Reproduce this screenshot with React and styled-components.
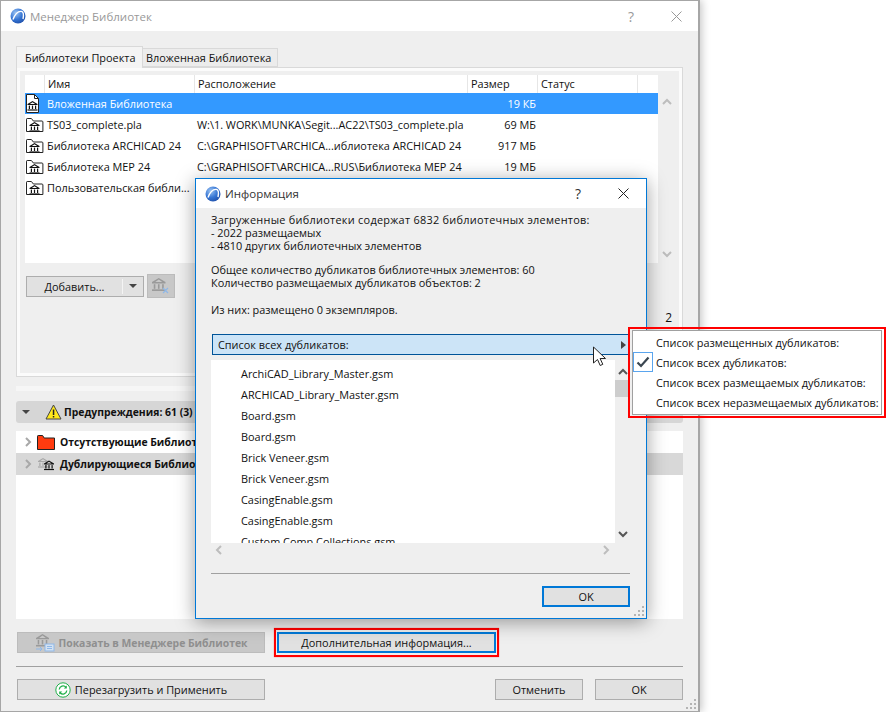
import React from 'react';
import styled, { createGlobalStyle } from 'styled-components';

const Global = createGlobalStyle`
  html, body { margin: 0; padding: 0; background: #fff; }
  body { font-family: "Open Sans", "Noto Sans", sans-serif; font-size: 10.9px; color: #111; }
`;

const Page = styled.div`
  position: relative;
  width: 886px;
  height: 712px;
  overflow: hidden;
  background: #fff;
`;
const Win = styled.div`
  box-sizing: border-box;
  width: 700px;
  height: 712px;
  border: 1px solid #a6a6a6;
  border-width: 1px 2px 1px 1px;
  background: #efefef;
  box-shadow: 2px 0 8px rgba(0, 0, 0, 0.22);
  display: flex;
  flex-direction: column;
  position: relative;
`;
const TitleBar = styled.div`
  height: ${p => p.$h}px;
  flex: none;
  background: #fff;
  display: flex;
  align-items: center;
  padding: 0 ${p => p.$right}px 0 ${p => p.$left}px;
  gap: 4px;
  font-size: 11.5px;
  color: ${p => (p.$active ? '#333' : '#999')};
`;
const TitleText = styled.span`
  flex: 1;
`;
const TitleBtn = styled.span`
  width: 20px;
  margin-left: ${p => p.$gap || 0}px;
  display: flex;
  justify-content: center;
  font-size: 14px;
`;
const Body = styled.div`
  flex: 1;
  padding: 15px 15px 0;
  display: flex;
  flex-direction: column;
`;
const Tabs = styled.div`
  display: flex;
  align-items: flex-end;
  height: 21px;
  position: relative;
  z-index: 1;
`;
const Tab = styled.div`
  box-sizing: border-box;
  width: ${p => p.$w}px;
  height: ${p => (p.$active ? 22 : 19)}px;
  margin-bottom: ${p => (p.$active ? -1 : 0)}px;
  border: 1px solid #d9d9d9;
  border-bottom: ${p => (p.$active ? 'none' : '1px solid #d9d9d9')};
  border-left: ${p => (p.$active ? '1px solid #d9d9d9' : 'none')};
  background: ${p => (p.$active ? '#f4f4f4' : '#ececec')};
  display: flex;
  align-items: center;
  padding-left: ${p => (p.$active ? 8 : 3)}px;
  padding-bottom: 1px;
`;
const Pane = styled.div`
  box-sizing: border-box;
  height: 310px;
  border: 1px solid #d9d9d9;
  box-shadow: inset 0 0 0 3px #fbfbfb;
  padding: 7px 6px 0 8px;
  display: flex;
  flex-direction: column;
`;
const ListArea = styled.div`
  display: flex;
  height: 188px;
  flex: none;
`;
const List = styled.div`
  width: 633px;
  background: #fff;
  flex: none;
`;
const Row = styled.div`
  display: grid;
  grid-template-columns: 19px 150px 273px 70px 100px 20px;
  height: ${p => (p.$head ? 18 : 21)}px;
  align-items: center;
  background: ${p => (p.$selected ? '#3399ff' : 'transparent')};
  color: ${p => (p.$selected ? '#fff' : '#111')};
`;
const Cell = styled.div`
  height: 100%;
  display: flex;
  align-items: center;
  padding-left: ${p => (p.$icon ? 0 : 3)}px;
  padding-right: ${p => (p.$num ? 1 : 0)}px;
  padding-bottom: ${p => (p.$head ? 2 : 0)}px;
  justify-content: ${p => (p.$num ? 'flex-end' : 'flex-start')};
  border-left: ${p => (p.$head ? '1px solid #e6e6e6' : 'none')};
  box-sizing: border-box;
  white-space: nowrap;
  overflow: hidden;
`;
const VScroll = styled.div`
  width: ${p => p.$w}px;
  flex: none;
  display: flex;
  flex-direction: column;
  align-items: center;
  padding: ${p => p.$pad};
  box-sizing: border-box;
`;
const Spacer = styled.div`
  flex: 1;
`;
const Thumb = styled.div`
  width: 15px;
  height: 17px;
  margin-top: 2px;
  background: #cdcdcd;
`;
const Toolbar = styled.div`
  display: flex;
  align-items: center;
  height: 24px;
  margin: 11px 0 0 1px;
  gap: 3px;
`;
const Split = styled.div`
  box-sizing: border-box;
  width: 118px;
  height: 21px;
  background: #e1e1e1;
  border: 1px solid #adadad;
  display: flex;
  align-items: center;
`;
const SplitMain = styled.div`
  flex: 1;
  text-align: center;
  border-right: 1px solid #f4f4f4;
  height: 15px;
  line-height: 15px;
`;
const SplitArrow = styled.div`
  width: 20px;
  display: flex;
  justify-content: center;
`;
const Caret = styled.span`
  width: 0;
  height: 0;
  border-left: 4px solid transparent;
  border-right: 4px solid transparent;
  border-top: 4px solid #444;
`;
const IconBtn = styled.div`
  box-sizing: border-box;
  width: 28px;
  height: 24px;
  background: #c8c8c8;
  border: 1px solid #bcbcbc;
  display: flex;
  align-items: center;
  justify-content: center;
`;
const Count = styled.div`
  text-align: right;
  margin-top: 11px;
  padding-right: 4px;
  font-size: 12px;
`;
const Strip = styled.div`
  height: 5px;
  margin-top: 9px;
  background: #f6f6f6;
`;
const WarnBar = styled.div`
  height: 22px;
  margin-top: 10px;
  background: #d6d6d6;
  border-radius: 3px;
  display: flex;
  align-items: center;
  padding-left: 6px;
  font-weight: 700;
  font-size: 10.4px;
`;
const WarnCaret = styled(Caret)`
  margin-right: 15px;
`;
const WarnLabel = styled.span`
  margin-left: 2px;
`;
const Issues = styled.div`
  height: 188px;
  margin-top: 8px;
  background: #fff;
`;
const Issue = styled.div`
  height: 22px;
  display: flex;
  align-items: center;
  padding-left: 8px;
  gap: 3px;
  font-weight: 700;
  font-size: 10.4px;
  background: ${p => (p.$shade ? '#d8d8d8' : 'transparent')};
`;
const IssueLabel = styled.span`
  margin-left: 2px;
  white-space: nowrap;
`;
const BtnRow = styled.div`
  display: flex;
  align-items: center;
  height: ${p => p.$h}px;
  margin: ${p => p.$m};
  gap: 9px;
`;
const Button = styled.div`
  box-sizing: border-box;
  width: ${p => p.$w}px;
  height: ${p => p.$h || 21}px;
  background: ${p => (p.$off ? '#c8c8c8' : '#e1e1e1')};
  border: ${p => (p.$focus ? '2px solid #0078d7' : `1px solid ${p.$off ? '#bcbcbc' : '#adadad'}`)};
  color: ${p => (p.$off ? '#8f8f8f' : '#111')};
  font-weight: ${p => (p.$off ? 700 : 400)};
  font-size: ${p => (p.$off ? '10.4px' : 'inherit')};
  display: flex;
  align-items: center;
  justify-content: center;
  gap: 4px;
  flex: none;
`;
const RedFrame = styled.div`
  box-sizing: border-box;
  width: 225px;
  height: 29px;
  border: 2px solid #f00;
  box-shadow: 0 0 1px #f66;
  padding: 2px 1px;
  flex: none;
`;
const Rule = styled.div`
  height: 1px;
  flex: none;
  background: #a0a0a0;
  margin-top: ${p => p.$mt}px;
`;
const Footer = styled.div`
  display: flex;
  gap: 12px;
`;
const FooterGap = styled.div`
  flex: 1;
`;
const Grip = styled.svg`
  position: absolute;
  right: 1px;
  bottom: 1px;
`;

/* dialog over the window */
const Dialog = styled.div`
  position: absolute;
  left: 195px;
  top: 178px;
  box-sizing: border-box;
  width: 452px;
  height: 441px;
  border: 1px solid #0078d7;
  background: #efefef;
  box-shadow: 0 3px 18px rgba(0, 0, 0, 0.38);
  display: flex;
  flex-direction: column;
`;
const DialogBody = styled.div`
  padding: 5px 16px 0 15px;
  display: flex;
  flex-direction: column;
`;
const Line = styled.div`
  height: 13px;
  line-height: 13px;
  margin-bottom: ${p => p.$after || 0}px;
  letter-spacing: ${p => p.$track || 0}px;
  white-space: nowrap;
`;
const Select = styled.div`
  box-sizing: border-box;
  height: 21px;
  width: 418px;
  margin-left: 1px;
  background: #cce4f7;
  border: 1px solid #005499;
  display: flex;
  align-items: center;
  justify-content: space-between;
  padding: 0 3px 0 5px;
`;
const SideCaret = styled.span`
  width: 0;
  height: 0;
  border-top: 4px solid transparent;
  border-bottom: 4px solid transparent;
  border-left: 5px solid #444;
`;
const DupArea = styled.div`
  display: flex;
  margin-top: 5px;
  height: 183px;
`;
const DupList = styled.div`
  width: 404px;
  flex: none;
  background: #fff;
  overflow: hidden;
  padding: 3px 0 0 30px;
  box-sizing: border-box;
`;
const DupItem = styled.div`
  height: 21px;
  line-height: 21px;
  white-space: nowrap;
`;
const HScroll = styled.div`
  width: 404px;
  height: 14px;
  display: flex;
  justify-content: space-between;
  align-items: center;
  padding: 0 3px 0 4px;
  box-sizing: border-box;
`;
const DialogFoot = styled.div`
  display: flex;
  justify-content: flex-end;
  margin: 12px 0 0;
  width: 419px;
`;

/* popup menu */
const MenuFrame = styled.div`
  position: absolute;
  left: 628px;
  top: 327px;
  box-sizing: border-box;
  width: 258px;
  height: 91px;
  border: 2px solid #f00;
  padding: 1px 2px 1px 2px;
`;
const Menu = styled.div`
  box-sizing: border-box;
  height: 100%;
  background: #fff;
  border: 1px solid #a0a0a0;
  padding-top: 1px;
`;
const MenuItem = styled.div`
  height: 20px;
  display: flex;
  align-items: center;
  white-space: nowrap;
`;
const CheckBox = styled.div`
  box-sizing: border-box;
  width: 20px;
  height: 20px;
  margin-right: 3px;
  flex: none;
  display: flex;
  align-items: center;
  justify-content: center;
  border: 1px solid ${p => (p.$on ? '#5aa5ee' : 'transparent')};
`;
const Cursor = styled.svg`
  position: absolute;
  left: 592px;
  top: 346px;
`;

const Logo = () => (
  <svg width="16" height="16" viewBox="0 0 16 16">
    <defs>
      <radialGradient id="lg" cx="35%" cy="30%" r="80%">
        <stop offset="0" stopColor="#9cc4f2" />
        <stop offset="0.55" stopColor="#3575d4" />
        <stop offset="1" stopColor="#1f4da6" />
      </radialGradient>
    </defs>
    <circle cx="8" cy="8" r="7.5" fill="url(#lg)" />
    <path d="M3 11.5C5 6 8.5 3 11.5 3.4c2 .5 2.3 3.6 1.5 7.6" fill="none" stroke="#fff" strokeWidth="1.4" />
  </svg>
);

const BankShape = ({ color = '#111' }) => (
  <g fill={color}>
    <path d="M5 0l5 3v1H0V3zM5 1.2L2.4 3h5.2z" fillRule="evenodd" />
    <rect x="1.3" y="4.6" width="1.2" height="3.4" />
    <rect x="4.4" y="4.6" width="1.2" height="3.4" />
    <rect x="7.5" y="4.6" width="1.2" height="3.4" />
    <rect x="0" y="8.4" width="10" height="1.2" />
  </g>
);

const FolderLib = () => (
  <svg width="19" height="16" viewBox="0 0 19 16">
    <path d="M1.5 14.5V2.2c0-.4.3-.7.7-.7h4.2l2 2.5h8.6c.5 0 .9.4.9.9v9.6z" fill="#fff" stroke="#222" />
    <g transform="translate(4.5 5)"><BankShape /></g>
  </svg>
);

const DocLib = () => (
  <svg width="15" height="19" viewBox="0 0 15 19">
    <path d="M1.5.5h8l4 4v14h-12z" fill="#fff" stroke="#222" />
    <path d="M9.5.5v4h4" fill="none" stroke="#222" />
    <g transform="translate(2.5 7)"><BankShape /></g>
  </svg>
);

const Chevron = ({ dir = 'up', color = '#bdbdbd' }) => {
  const paths = {
    up: 'M1 6l4-4 4 4',
    down: 'M1 2l4 4 4-4',
    left: 'M6 1L2 5l4 4',
    right: 'M2 1l4 4-4 4',
  };
  return (
    <svg width="10" height="10" viewBox="0 0 10 10">
      <path d={paths[dir]} fill="none" stroke={color} strokeWidth="2" />
    </svg>
  );
};

const Close = ({ color }) => (
  <svg width="11" height="11" viewBox="0 0 11 11">
    <path d="M.5.5l10 10M10.5.5l-10 10" stroke={color} fill="none" />
  </svg>
);

const WarnIcon = () => (
  <svg width="17" height="16" viewBox="0 0 17 16">
    <path d="M8.5 1L16 15H1z" fill="#ffe81a" stroke="#444" strokeLinejoin="round" />
    <rect x="7.8" y="5.5" width="1.5" height="5.5" fill="#222" />
    <rect x="7.8" y="12" width="1.5" height="1.5" fill="#222" />
  </svg>
);

const RedFolder = () => (
  <svg width="18" height="15" viewBox="0 0 18 15">
    <path d="M.5 14.5V1.2c0-.4.3-.7.7-.7h4.4l1.6 2.5h10.3v11.5z" fill="#ff3b0f" stroke="#222" />
  </svg>
);

const DupLib = () => (
  <svg width="18" height="13" viewBox="0 0 18 13">
    <g transform="translate(1 0)"><BankShape color="#a8a8a8" /></g>
    <g transform="translate(7 2.5)"><BankShape color="#111" /></g>
  </svg>
);

const RemoveLib = () => (
  <svg width="18" height="18" viewBox="0 0 18 18">
    <g transform="translate(0 1) scale(1.35)"><BankShape color="#9a9a9a" /></g>
    <path d="M11 11l5 5M16 11l-5 5" stroke="#8fb8e8" strokeWidth="1.2" />
  </svg>
);

const ShowLib = () => (
  <svg width="20" height="18" viewBox="0 0 20 18">
    <g transform="translate(1 0) scale(1.3)"><BankShape color="#9a9a9a" /></g>
    <rect x="10" y="10" width="9" height="7" fill="#d4e2f2" stroke="#8fb8e8" />
    <path d="M12 12.5h5M12 14.5h5" stroke="#8fb8e8" />
    <path d="M1 15h6m-2-2l2 2-2 2" fill="none" stroke="#8fb8e8" />
  </svg>
);

const ReloadIcon = () => (
  <svg width="16" height="16" viewBox="0 0 16 16">
    <circle cx="8" cy="8" r="7.2" fill="#fff" stroke="#21b04b" />
    <path d="M4.2 7.5A3.9 3.9 0 0 1 11 5.3" fill="none" stroke="#21b04b" strokeWidth="1.3" />
    <path d="M11.8 3.4v3h-3z" fill="#21b04b" />
    <path d="M11.8 8.5A3.9 3.9 0 0 1 5 10.7" fill="none" stroke="#21b04b" strokeWidth="1.3" />
    <path d="M4.2 12.6v-3h3z" fill="#21b04b" />
  </svg>
);

const GripDots = () => (
  <Grip width="11" height="11" viewBox="0 0 11 11" fill="#b4b4b4">
    <rect x="8" y="0" width="2" height="2" />
    <rect x="4" y="4" width="2" height="2" />
    <rect x="8" y="4" width="2" height="2" />
    <rect x="0" y="8" width="2" height="2" />
    <rect x="4" y="8" width="2" height="2" />
    <rect x="8" y="8" width="2" height="2" />
  </Grip>
);

const libraries = [
  { icon: <DocLib />, name: 'Вложенная Библиотека', path: '', size: '19 КБ', selected: true },
  { icon: <FolderLib />, name: 'TS03_complete.pla', path: 'W:\\1. WORK\\MUNKA\\Segit...AC22\\TS03_complete.pla', size: '69 МБ' },
  { icon: <FolderLib />, name: 'Библиотека ARCHICAD 24', path: 'C:\\GRAPHISOFT\\ARCHICA...иблиотека ARCHICAD 24', size: '917 МБ' },
  { icon: <FolderLib />, name: 'Библиотека MEP 24', path: 'C:\\GRAPHISOFT\\ARCHICA...RUS\\Библиотека MEP 24', size: '19 МБ' },
  { icon: <FolderLib />, name: 'Пользовательская библи...', path: '', size: '' },
];

const duplicates = [
  'ArchiCAD_Library_Master.gsm',
  'ARCHICAD_Library_Master.gsm',
  'Board.gsm',
  'Board.gsm',
  'Brick Veneer.gsm',
  'Brick Veneer.gsm',
  'CasingEnable.gsm',
  'CasingEnable.gsm',
  'Custom Comp Collections.gsm',
];

const menuItems = [
  'Список размещенных дубликатов:',
  'Список всех дубликатов:',
  'Список всех размещаемых дубликатов:',
  'Список всех неразмещаемых дубликатов:',
];

export default function App() {
  return (
    <Page>
      <Global />
      <Win>
        <TitleBar $h={30} $left={9} $right={12}>
          <Logo />
          <TitleText>Менеджер Библиотек</TitleText>
          <TitleBtn>?</TitleBtn>
          <TitleBtn $gap={21}><Close color="#999" /></TitleBtn>
        </TitleBar>
        <Body>
          <Tabs>
            <Tab $active $w={127}>Библиотеки Проекта</Tab>
            <Tab $w={135}>Вложенная Библиотека</Tab>
          </Tabs>
          <Pane>
            <ListArea>
              <List>
                <Row $head>
                  <Cell $icon />
                  <Cell $head>Имя</Cell>
                  <Cell $head>Расположение</Cell>
                  <Cell $head>Размер</Cell>
                  <Cell $head>Статус</Cell>
                  <Cell $head />
                </Row>
                {libraries.map(lib => (
                  <Row key={lib.name} $selected={lib.selected}>
                    <Cell $icon>{lib.icon}</Cell>
                    <Cell>{lib.name}</Cell>
                    <Cell>{lib.path}</Cell>
                    <Cell $num>{lib.size}</Cell>
                    <Cell />
                    <Cell />
                  </Row>
                ))}
              </List>
              <VScroll $w={17} $pad="23px 0 3px">
                <Chevron dir="up" />
                <Spacer />
                <Chevron dir="down" />
              </VScroll>
            </ListArea>
            <Toolbar>
              <Split>
                <SplitMain>Добавить...</SplitMain>
                <SplitArrow><Caret /></SplitArrow>
              </Split>
              <IconBtn><RemoveLib /></IconBtn>
            </Toolbar>
            <Count>2</Count>
          </Pane>
          <Strip />
          <WarnBar>
            <WarnCaret />
            <WarnIcon />
            <WarnLabel>Предупреждения: 61 (3)</WarnLabel>
          </WarnBar>
          <Issues>
            <Issue>
              <Chevron dir="right" color="#a8a8a8" />
              <RedFolder />
              <IssueLabel>Отсутствующие Библиотеки</IssueLabel>
            </Issue>
            <Issue $shade>
              <Chevron dir="right" color="#a8a8a8" />
              <DupLib />
              <IssueLabel>Дублирующиеся Библиотеки</IssueLabel>
            </Issue>
          </Issues>
          <BtnRow $h={29} $m="9px 0 0 1px">
            <Button $off $w={248}><ShowLib />Показать в Менеджере Библиотек</Button>
            <RedFrame>
              <Button $focus $w={219}>Дополнительная информация...</Button>
            </RedFrame>
          </BtnRow>
          <Rule $mt={9} />
          <BtnRow $h={21} $m="12px 0 0 1px">
            <Button $w={248}><ReloadIcon />Перезагрузить и Применить</Button>
            <FooterGap />
            <Footer>
              <Button $w={88}>Отменить</Button>
              <Button $w={88}>OK</Button>
            </Footer>
          </BtnRow>
        </Body>
        <GripDots />
      </Win>

      <Dialog>
        <TitleBar $active $h={29} $left={9} $right={13}>
          <Logo />
          <TitleText>Информация</TitleText>
          <TitleBtn>?</TitleBtn>
          <TitleBtn $gap={21}><Close color="#222" /></TitleBtn>
        </TitleBar>
        <DialogBody>
          <Line $track={0.28}>Загруженные библиотеки содержат 6832 библиотечных элементов:</Line>
          <Line>- 2022 размещаемых</Line>
          <Line $after={11}>- 4810 других библиотечных элементов</Line>
          <Line>Общее количество дубликатов библиотечных элементов: 60</Line>
          <Line $after={14}>Количество размещаемых дубликатов объектов: 2</Line>
          <Line $after={18}>Из них: размещено 0 экземпляров.</Line>
          <Select>
            Список всех дубликатов:
            <SideCaret />
          </Select>
          <DupArea>
            <DupList>
              {duplicates.map((name, i) => <DupItem key={i}>{name}</DupItem>)}
            </DupList>
            <VScroll $w={15} $pad="8px 0 3px">
              <Chevron dir="up" color="#555" />
              <Thumb />
              <Spacer />
              <Chevron dir="down" color="#555" />
            </VScroll>
          </DupArea>
          <HScroll>
            <Chevron dir="left" />
            <Chevron dir="right" />
          </HScroll>
          <Rule $mt={16} />
          <DialogFoot>
            <Button $focus $w={88}>OK</Button>
          </DialogFoot>
        </DialogBody>
        <GripDots />
      </Dialog>

      <Cursor width="16" height="22" viewBox="0 0 16 22">
        <path d="M1.5 1v16l4-3.5 2.7 6 2.6-1.2-2.7-5.8h5.4z" fill="#fff" stroke="#222" />
      </Cursor>

      <MenuFrame>
        <Menu>
          {menuItems.map((item, i) => (
            <MenuItem key={item}>
              <CheckBox $on={i === 1}>
                {i === 1 && (
                  <svg width="14" height="12" viewBox="0 0 14 12">
                    <path d="M1.5 6.5L5 10 12.5 1.5" fill="none" stroke="#3a4650" strokeWidth="2.2" />
                  </svg>
                )}
              </CheckBox>
              {item}
            </MenuItem>
          ))}
        </Menu>
      </MenuFrame>
    </Page>
  );
}
